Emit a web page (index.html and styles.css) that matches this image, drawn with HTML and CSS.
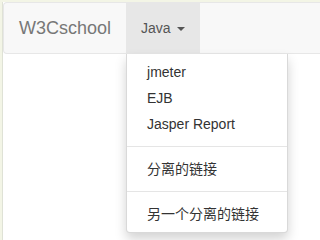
FILE: index.html
```html
<!DOCTYPE html>
<html>
<head>
<meta charset="utf-8">
<link rel="stylesheet" href="styles.css">
</head>
<body>
<div class="frame">
  <nav class="navbar">
    <a class="brand">W3Cschool</a>
    <div class="nav-item open">
      <a class="toggle">Java <span class="caret"></span></a>
      <ul class="menu">
        <li><a>jmeter</a></li>
        <li><a>EJB</a></li>
        <li><a>Jasper Report</a></li>
        <li class="divider"></li>
        <li><a>分离的链接</a></li>
        <li class="divider"></li>
        <li><a>另一个分离的链接</a></li>
      </ul>
    </div>
  </nav>
</div>
</body>
</html>
```
FILE: styles.css
```css
html, body { margin: 0; padding: 0; }
body {
  background: #f3f5e6;
  padding: 2px 0 0 2px;
  font-family: "Liberation Sans", Arial, "Noto Sans CJK SC", sans-serif;
  font-size: 14px;
  line-height: 20px;
  color: #333;
  height: 240px;
  box-sizing: border-box;
  overflow: hidden;
}
.frame {
  background: #fff;
  border-left: 1px solid #dfe2d6;
  height: 100%;
}
.navbar {
  display: flex;
  min-height: 50px;
  background: #f8f8f8;
  border: 1px solid #e7e7e7;
  border-right: 0;
  border-radius: 4px 0 0 4px;
}
.brand {
  padding: 15px 15px;
  font-size: 18px;
  line-height: 20px;
  color: #777;
}
.nav-item { position: relative; }
.toggle {
  display: block;
  padding: 15px;
  line-height: 20px;
  color: #555;
}
.open .toggle { background: #e7e7e7; }
.caret {
  display: inline-block;
  width: 0; height: 0;
  margin-left: 2px;
  vertical-align: middle;
  border-top: 4px solid #555;
  border-left: 4px solid transparent;
  border-right: 4px solid transparent;
}
.menu {
  position: absolute;
  top: 100%;
  left: 0;
  min-width: 160px;
  margin: 1px 0 0;
  padding: 5px 0;
  list-style: none;
  background: #fff;
  border: 1px solid rgba(0,0,0,.15);
  border-top: 0;
  border-radius: 0 0 4px 4px;
  box-shadow: 0 6px 12px rgba(0,0,0,.175);
}
.menu a {
  display: block;
  padding: 3px 20px;
  line-height: 20px;
  color: #333;
  white-space: nowrap;
}
.divider {
  height: 1px;
  margin: 9px 0;
  background: #e5e5e5;
}
```
